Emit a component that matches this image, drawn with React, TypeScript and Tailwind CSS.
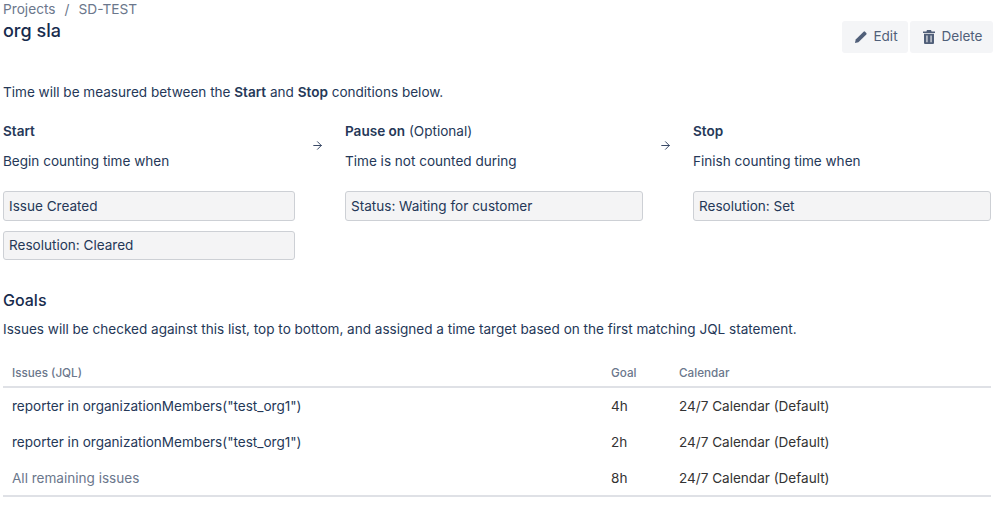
import React from 'react';
import { ArrowRight } from 'lucide-react';

type Goal = { jql: string; goal: string; muted?: boolean };

const goals: Goal[] = [
  { jql: 'reporter in organizationMembers("test_org1")', goal: '4h' },
  { jql: 'reporter in organizationMembers("test_org1")', goal: '2h' },
  { jql: 'All remaining issues', goal: '8h', muted: true },
];

const Condition = ({ label }: { label: string }) => (
  <div className="h-[29.5px] flex items-center px-[5px] bg-[#f4f4f5] border border-[#cdd0d5] rounded-[3px] text-[#253858]">
    {label}
  </div>
);

const Arrow = () => (
  <div className="w-[50px] pt-[15px] pr-[6px] flex justify-center text-[#344563]">
    <ArrowRight size={13} strokeWidth={1.8} />
  </div>
);

const PencilIcon = () => (
  <svg width="14" height="14" viewBox="0 0 14 14" fill="currentColor">
    <path d="M1 13l.7-3.4L9.6 1.7a1 1 0 0 1 1.4 0l1.3 1.3a1 1 0 0 1 0 1.4L4.4 12.3 1 13z" />
  </svg>
);

const TrashIcon = () => (
  <svg width="14" height="14" viewBox="0 0 14 14" fill="currentColor">
    <path d="M5 0h4l.6 1.5H13v1.4H1V1.5h3.4L5 0z" />
    <path fillRule="evenodd" d="M2 3.8h10v9.1a1.1 1.1 0 0 1-1.1 1.1H3.1A1.1 1.1 0 0 1 2 12.9V3.8zm2.4 1.8v6.6h1.1V5.6H4.4zm4.1 0v6.6h1.1V5.6H8.5z" />
  </svg>
);

export default function App() {
  return (
    <div className="w-[998px] h-[517px] overflow-hidden bg-white pl-[3px] pr-[7px] text-[13.55px] text-[#253858] font-['Inter',sans-serif]">
      <div className="flex justify-between items-start h-[53px]">
        <div>
          <div className="flex text-[13.7px] leading-[18px] text-[#6b778c]">
            <span>Projects</span>
            <span className="mx-[9px]">/</span>
            <span>SD-TEST</span>
          </div>
          <h1 className="text-[18px] leading-[26px] font-medium text-[#172b4d]">org sla</h1>
        </div>
        <div className="flex gap-[2px] mt-[21px] -mr-[2px] text-[#505f79]">
          <button className="h-[32px] w-[66px] pb-[1px] pl-[2px] flex items-center justify-center gap-[5px] bg-[#f4f5f7] rounded-[3px]">
            <PencilIcon />
            Edit
          </button>
          <button className="h-[32px] w-[83px] pb-[1px] pl-[2px] flex items-center justify-center gap-[5px] bg-[#f4f5f7] rounded-[3px]">
            <TrashIcon />
            Delete
          </button>
        </div>
      </div>

      <p className="mt-[29px] leading-[20px]">
        Time will be measured between the <b className="font-semibold">Start</b> and{' '}
        <b className="font-semibold">Stop</b> conditions below.
      </p>

      <div className="flex mt-[19px]">
        <div className="w-[292px]">
          <div className="leading-[20px] font-semibold">Start</div>
          <div className="mt-[10px] leading-[20px]">Begin counting time when</div>
          <div className="mt-[20px] flex flex-col gap-[10px]">
            <Condition label="Issue Created" />
            <Condition label="Resolution: Cleared" />
          </div>
        </div>
        <div className="pt-[3px]">
          <Arrow />
        </div>
        <div className="w-[298px]">
          <div className="leading-[20px]">
            <span className="font-semibold">Pause on</span> (Optional)
          </div>
          <div className="mt-[10px] leading-[20px]">Time is not counted during</div>
          <div className="mt-[20px]">
            <Condition label="Status: Waiting for customer" />
          </div>
        </div>
        <div className="pt-[3px]">
          <Arrow />
        </div>
        <div className="w-[298px]">
          <div className="leading-[20px] font-semibold">Stop</div>
          <div className="mt-[10px] leading-[20px]">Finish counting time when</div>
          <div className="mt-[20px]">
            <Condition label="Resolution: Set" />
          </div>
        </div>
      </div>

      <h2 className="mt-[29px] text-[16px] leading-[22px] font-medium text-[#172b4d]">Goals</h2>
      <p className="mt-[8px] leading-[20px]">
        Issues will be checked against this list, top to bottom, and assigned a time target based on the first matching JQL statement.
      </p>

      <div className="mt-[23px] w-[988px] border-b-2 border-[#dfe1e6]">
        <div className="flex items-center h-[26px] pb-[1px] border-b-2 border-[#dfe1e6] text-[11.7px] font-medium text-[#6b778c]">
          <div className="w-[608px] pl-[9px]">Issues (JQL)</div>
          <div className="w-[68px]">Goal</div>
          <div>Calendar</div>
        </div>
        <div className="h-[107px]">
          {goals.map((g, i) => (
            <div key={i} className="flex items-center h-[36px] text-[#333]">
              <div className={`w-[608px] pl-[9px] ${g.muted ? 'text-[#6b778c]' : 'text-[#253858]'}`}>{g.jql}</div>
              <div className="w-[68px]">{g.goal}</div>
              <div>24/7 Calendar (Default)</div>
            </div>
          ))}
        </div>
      </div>
    </div>
  );
}
